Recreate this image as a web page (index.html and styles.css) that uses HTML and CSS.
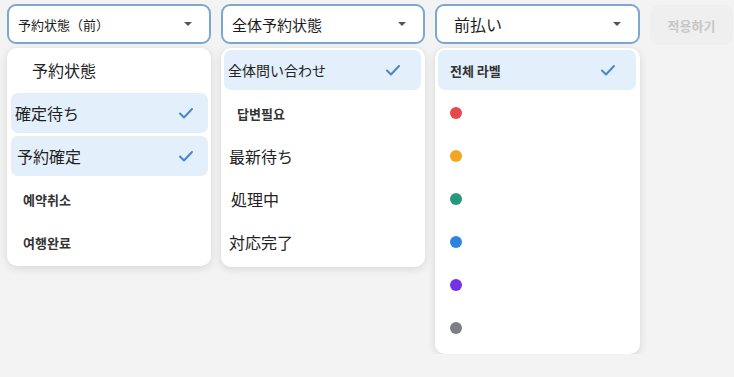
FILE: index.html
```html
<!DOCTYPE html>
<html lang="ja">
<head>
    <meta charset="UTF-8">
    <title>予約フィルター</title>
    <link rel="stylesheet" href="styles.css">
</head>
<body>
    <div class="bar">
        <div class="filter">
            <div class="select"><span class="val s13">予約状態（前）</span><i class="caret"></i></div>
            <ul class="menu">
                <li class="ja pl20">予約状態</li>
                <li class="ja on pl4">確定待ち<svg class="chk" viewBox="0 0 16 12"><path d="M2 6.5l4 4 8-8.5"/></svg></li>
                <li class="ja on pl6">予約確定<svg class="chk" viewBox="0 0 16 12"><path d="M2 6.5l4 4 8-8.5"/></svg></li>
                <li class="ko pl12">예약취소</li>
                <li class="ko pl12">여행완료</li>
            </ul>
        </div>
        <div class="filter">
            <div class="select"><span class="val s15">全体予約状態</span><i class="caret"></i></div>
            <ul class="menu m2">
                <li class="ja s14 on pl4">全体問い合わせ<svg class="chk" viewBox="0 0 16 12"><path d="M2 6.5l4 4 8-8.5"/></svg></li>
                <li class="ko pl13">답변필요</li>
                <li class="ja pl5">最新待ち</li>
                <li class="ja pl7">処理中</li>
                <li class="ja pl5">対応完了</li>
            </ul>
        </div>
        <div class="filter wide">
            <div class="select"><span class="val s16 pv">前払い</span><i class="caret"></i></div>
            <ul class="menu m2 m3">
                <li class="ko on pl12">전체 라벨<svg class="chk" viewBox="0 0 16 12"><path d="M2 6.5l4 4 8-8.5"/></svg></li>
                <li class="pl12"><span class="dot" style="background:#e5484d"></span></li>
                <li class="pl12"><span class="dot" style="background:#f5a524"></span></li>
                <li class="pl12"><span class="dot" style="background:#27987a"></span></li>
                <li class="pl12"><span class="dot" style="background:#2b85dc"></span></li>
                <li class="pl12"><span class="dot" style="background:#7433e2"></span></li>
                <li class="pl12"><span class="dot" style="background:#7c7f84"></span></li>
            </ul>
        </div>
        <button class="apply">적용하기</button>
    </div>
</body>
</html>
```
FILE: styles.css
```css
body{margin:0; background:#f3f3f3; font-family:"Noto Sans CJK JP", "Noto Sans CJK KR", sans-serif; color:#222;}

.bar{display:flex; gap:10px; padding:4px 0 0 7px; align-items:flex-start;}

.filter{width:204px; display:flex; flex-direction:column; gap:4px;}
.filter.wide{width:205px;}

.select{height:40px; box-sizing:border-box; border:2px solid #7ba8d3; border-radius:9px; background:#fff; display:flex; align-items:center; padding:0 17px 0 9px;}
.val{flex:1; color:#1c1c1c; white-space:nowrap;}
.s13{font-size:13px;}
.s14{font-size:14px;}
.s15{font-size:15px;}
.s16{font-size:16px;}
.pv{padding-left:8px;}
.caret{width:0; height:0; border-left:4px solid transparent; border-right:4px solid transparent; border-top:4px solid #555;}

.menu{list-style:none; margin:0; padding:2px 3px 4px 4px; background:#fff; border-radius:10px; box-shadow:0 2px 8px rgba(0,0,0,0.12); display:flex; flex-direction:column; gap:3px;}
.m2{padding:2px 4px 5px 3px;}
.m3{padding-bottom:6px;}
.menu li{height:40px; display:flex; align-items:center; border-radius:7px; padding-right:14px;}
.menu li.on{background:#e3f0fb;}
.ja{font-size:16px; color:#222;}
.menu li.s14{font-size:14px;}
.ko{font-family:"Noto Sans CJK KR", sans-serif; font-size:13px; font-weight:700; color:#333;}

.pl4{padding-left:4px;}
.pl5{padding-left:5px;}
.pl6{padding-left:6px;}
.pl7{padding-left:7px;}
.pl12{padding-left:12px;}
.pl13{padding-left:13px;}
.pl20{padding-left:21px;}

.chk{width:16px; height:12px; margin-left:auto; fill:none; stroke:#4a86c3; stroke-width:2; stroke-linecap:round; stroke-linejoin:round;}
.m2 .chk{margin-right:6px;}

.dot{width:12px; height:12px; border-radius:50%; display:inline-block;}

.apply{margin-top:1px; width:83px; height:40px; border:none; border-radius:9px; background:#efefef; color:#c6c6c6; font-family:"Noto Sans CJK KR", sans-serif; font-size:13px; font-weight:700;}
```
